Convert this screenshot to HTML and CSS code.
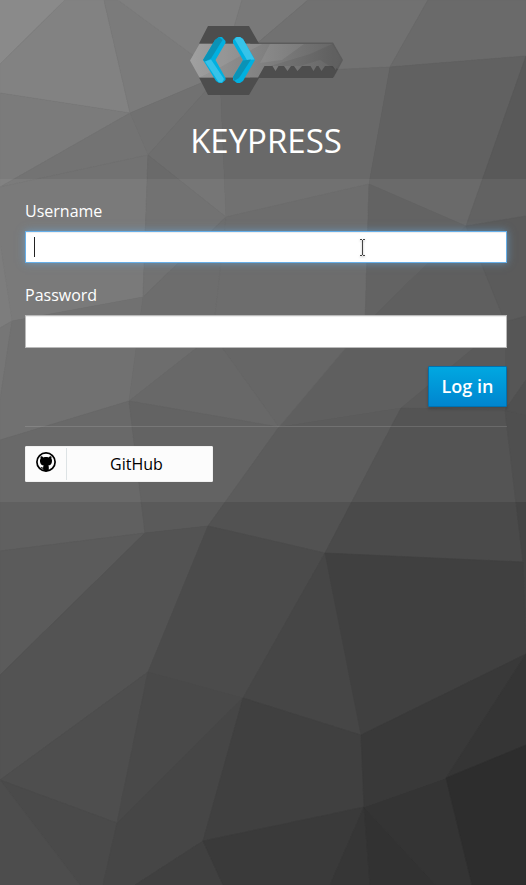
FILE: index.html
```html
<!DOCTYPE html>
<html lang="en">
<head>
<meta charset="utf-8">
<title>KEYPRESS</title>
<link rel="stylesheet" href="styles.css">
</head>
<body>
<svg class="backdrop" viewBox="0 0 526 885" aria-hidden="true">
<g stroke-width=".6">
<path fill="#8a8a8a" stroke="#8a8a8a" d="M0 0H65L0 64z"/>
<path fill="#828282" stroke="#828282" d="M65 0H104L130 113 0 93V64z"/>
<path fill="#7b7b7b" stroke="#7b7b7b" d="M104 0H118L220 75 130 113z"/>
<path fill="#7f7f7f" stroke="#7f7f7f" d="M118 0H242L220 75z"/>
<path fill="#797979" stroke="#797979" d="M242 0H308L220 75z"/>
<path fill="#717171" stroke="#717171" d="M308 0H428L390 67 220 75z"/>
<path fill="#6a6a6a" stroke="#6a6a6a" d="M428 0H526V56L390 67z"/>
<path fill="#7b7b7b" stroke="#7b7b7b" d="M0 93 130 113 0 187z"/>
<path fill="#717171" stroke="#717171" d="M130 113 220 75 148 155z"/>
<path fill="#737373" stroke="#737373" d="M130 113 148 155 0 187z"/>
<path fill="#6e6e6e" stroke="#6e6e6e" d="M220 75 226 217 148 155z"/>
<path fill="#696969" stroke="#696969" d="M220 75 390 67 369 184 226 217z"/>
<path fill="#616161" stroke="#616161" d="M390 67 526 56 466 226 369 184z"/>
<path fill="#595959" stroke="#595959" d="M526 56V216L466 226z"/>
<path fill="#727272" stroke="#727272" d="M0 187 148 155 143 297 12 321 0 243z"/>
<path fill="#6a6a6a" stroke="#6a6a6a" d="M148 155 226 217 143 297z"/>
<path fill="#757575" stroke="#757575" d="M0 243 12 321 0 328z"/>
<path fill="#6e6e6e" stroke="#6e6e6e" d="M12 321 0 328V400z"/>
<path fill="#696969" stroke="#696969" d="M12 321 143 297 129 401 0 440V400z"/>
<path fill="#646464" stroke="#646464" d="M143 297 226 217 213 335 129 401z"/>
<path fill="#646464" stroke="#646464" d="M226 217 369 184 365 325 213 335z"/>
<path fill="#5a5a5a" stroke="#5a5a5a" d="M369 184 466 226 365 325z"/>
<path fill="#565656" stroke="#565656" d="M466 226 505 322 401 408 279 427 365 325z"/>
<path fill="#515151" stroke="#515151" d="M466 226 526 216V316L505 322z"/>
<path fill="#4c4c4c" stroke="#4c4c4c" d="M526 316V380L505 410V322z"/>
<path fill="#505050" stroke="#505050" d="M401 408 505 322V410z"/>
<path fill="#5d5d5d" stroke="#5d5d5d" d="M213 335 365 325 279 427z"/>
<path fill="#5f5f5f" stroke="#5f5f5f" d="M213 335 279 427 129 401z"/>
<path fill="#606060" stroke="#606060" d="M129 401 0 440V551L145 533z"/>
<path fill="#5a5a5a" stroke="#5a5a5a" d="M129 401 279 427 208 526 145 533z"/>
<path fill="#525252" stroke="#525252" d="M279 427 401 408 325 553 208 526z"/>
<path fill="#4a4a4a" stroke="#4a4a4a" d="M401 408 505 410 523 562 325 553z"/>
<path fill="#444" stroke="#444" d="M505 410 526 415V654L523 562z"/>
<path fill="#464646" stroke="#464646" d="M505 410 526 380V415z"/>
<path fill="#5b5b5b" stroke="#5b5b5b" d="M145 533 0 551V675z"/>
<path fill="#535353" stroke="#535353" d="M145 533 208 526 148 672 0 780V675z"/>
<path fill="#4b4b4b" stroke="#4b4b4b" d="M208 526 325 553 243 698 148 672z"/>
<path fill="#464646" stroke="#464646" d="M325 553 361 735 243 698z"/>
<path fill="#404040" stroke="#404040" d="M325 553 523 562 526 654 361 735z"/>
<path fill="#4e4e4e" stroke="#4e4e4e" d="M148 672 117 823 0 780z"/>
<path fill="#494949" stroke="#494949" d="M148 672 243 698 117 823z"/>
<path fill="#4a4a4a" stroke="#4a4a4a" d="M0 780 117 823 103 885H80z"/>
<path fill="#4d4d4d" stroke="#4d4d4d" d="M0 780 80 885H0z"/>
<path fill="#464646" stroke="#464646" d="M117 823 243 698 203 841 135 885H103z"/>
<path fill="#404040" stroke="#404040" d="M203 841 223 885H135z"/>
<path fill="#404040" stroke="#404040" d="M243 698 361 735 364 807 203 841z"/>
<path fill="#3a3a3a" stroke="#3a3a3a" d="M203 841 364 807 330 885H223z"/>
<path fill="#363636" stroke="#363636" d="M364 807 370 885H330z"/>
<path fill="#323232" stroke="#323232" d="M364 807 436 885H370z"/>
<path fill="#343434" stroke="#343434" d="M364 807 446 778 472 885H436z"/>
<path fill="#393939" stroke="#393939" d="M361 735 526 654 446 778 364 807z"/>
<path fill="#353535" stroke="#353535" d="M526 654V745L446 778z"/>
<path fill="#2d2d2d" stroke="#2d2d2d" d="M446 778 526 745V885H472z"/>
</g>
</svg>
<div class="page">
<header class="header">
<svg class="logo" viewBox="190 26 154 70" width="154" height="70" aria-hidden="true">
<defs>
<linearGradient id="metal" x1="0" x2="1"><stop offset="0" stop-color="#999"/><stop offset=".4" stop-color="#858585"/><stop offset="1" stop-color="#646464"/></linearGradient>
</defs>
<path fill="#5c5c5c" d="M250 42.500H333L343 60 334 77H258z"/>
<path fill="#4d4d4d" d="M208 26H249L259 43.500H199zM199 77.500 208 95H249L259 78H333L338 69 325 62H266L250 66V77.500z"/>
<path fill="url(#metal)" d="M199.500 44H332L341.500 60 335.500 70 333 66H325L321.500 71 318.500 66H316.500L313.500 71 310.500 66H302L297.500 71 294 66H291L287.500 71 284 66H278.500L275.500 71 272.500 66H264.500L258 77.500H199.500L190 60.500z"/>
<path fill="#fff" fill-opacity=".07" d="M199.500 44H262L219 68 199.500 77.500 190 60.500zM270 44H304L282 60 260 63z"/>
<path fill="#000" fill-opacity=".06" d="M310 54 332 44 341.500 60 335.500 70 320 60 300 66H270z"/>
<path fill="#00b0e0" d="M219 37H222L225.500 41V43L215.500 60 225.500 78V80L222 83H219L216 81 203 60 215 40z"/>
<path fill="#0b92b6" d="M215 40 219 37 222.500 40 211 58.500 205 61.500 203 60z"/>
<path fill="#36c3ea" d="M205 61.500 211 59.500 224 79 222 82.500 218.500 82z"/>
<path fill="#00b0e0" d="M236 37H240L243 39 255 60 243 81 240 83H237L233 80V77L243 60 233 43V40z"/>
<path fill="#36c3ea" d="M234.500 39 237 37H240L243 39 254.500 59.500 247 60z"/>
<path fill="#0b92b6" d="M243 60.500 251 59.500 239 78 234 81 233 77z"/>
</svg>
<h1 class="title">KEYPRESS</h1>
</header>
<main class="card">
<form class="form">
<div class="field">
<label class="label" for="username">Username</label>
<div class="input input-focused" id="username"><span class="caret"></span>
<svg class="pointer" viewBox="0 0 7 17" width="7" height="17" aria-hidden="true"><path fill="none" stroke="#444" d="M1 .5H3M4 .5H6M3.500 1V16M1 16.500H3M4 16.500H6"/></svg>
</div>
</div>
<div class="field">
<label class="label" for="password">Password</label>
<div class="input" id="password"></div>
</div>
<div class="actions"><button class="login" type="button">Log in</button></div>
</form>
<div class="social">
<button class="provider" type="button">
<span class="provider-icon"><svg viewBox="0 0 20 20" width="20" height="20" aria-hidden="true"><circle cx="10" cy="10" r="9.100" fill="none" stroke="#000" stroke-width="1.700"/><path d="M4.700 4.300C5.900 4.300 6.800 4.900 7.500 5.400 9 5 11 5 12.500 5.400 13.200 4.900 14.100 4.300 15.300 4.300 15.600 5.200 15.600 6 15.400 6.700 16.200 7.800 16.100 9 15.800 10.400 15.400 12.500 14 13.300 12.300 13.600 12.700 14.200 12.800 14.700 12.800 15.400V18.800C11 19.400 9 19.400 7.200 18.800V16.700C5.500 17 5 15.800 4.400 15 5.500 15 6 15.800 7.200 15.500 7.200 14.600 7.300 14.200 7.700 13.600 6 13.300 4.600 12.500 4.200 10.400 3.900 9 3.800 7.800 4.600 6.700 4.400 6 4.400 5.200 4.700 4.300z"/></svg></span>
<span class="provider-name">GitHub</span>
</button>
</div>
</main>
</div>
</body>
</html>
```
FILE: styles.css
```css
* {
  box-sizing: border-box;
}

body {
  margin: 0;
  display: grid;
  width: 526px;
  height: 885px;
  overflow: hidden;
  background: #4a4a4a;
  color: #fff;
  font-family: "Open Sans", "Noto Sans", sans-serif;
  font-size: 16px;
}

.backdrop,
.page {
  grid-area: 1 / 1;
}

.backdrop {
  width: 526px;
  height: 885px;
}

.page {
  z-index: 1;
}

.header {
  display: flex;
  flex-direction: column;
  align-items: center;
  height: 179px;
  padding: 26px 0 0 7px;
}

.title {
  margin: 22px 0 0;
  padding-right: 1px;
  font-size: 33px;
  font-weight: 400;
  line-height: 46px;
}

.card {
  height: 323px;
  padding: 20px 19px 0 25px;
  background: rgba(255, 255, 255, .06);
}

.field {
  height: 84px;
}

.label {
  display: block;
  height: 32px;
  line-height: 24px;
}

.input {
  display: flex;
  align-items: center;
  position: relative;
  height: 33px;
  padding: 0 9px;
  background: #fff;
  border: 1px solid #bababa;
  box-shadow: inset 0 1px 1px rgba(3, 3, 3, .075);
}

.input-focused {
  height: 32px;
  border-color: #66afe9;
  box-shadow: inset 0 1px 1px rgba(0, 0, 0, .075), 0 0 8px rgba(102, 175, 233, .6);
}

.caret {
  width: 1px;
  height: 20px;
  margin-left: -1px;
  background: #222;
}

.pointer {
  position: absolute;
  left: 333px;
  top: 7px;
  filter: drop-shadow(0 1px 1px rgba(0, 0, 0, .3));
}

.actions {
  display: flex;
  justify-content: flex-end;
  height: 60px;
  margin-top: -1px;
}

.login {
  width: 79px;
  height: 41px;
  padding: 0 0 1px;
  border: 1px solid #0071b0;
  border-radius: 1px;
  background: linear-gradient(#00a8e1, #0085cf);
  box-shadow: 0 2px 3px rgba(3, 3, 3, .2);
  color: #fff;
  font: 600 18px/24px "Open Sans", sans-serif;
}

.social {
  padding-top: 19px;
  border-top: 1px solid rgba(255, 255, 255, .13);
}

.provider {
  display: flex;
  align-items: center;
  width: 188px;
  height: 36px;
  padding: 0;
  border: 1px solid #f1f1f1;
  border-radius: 1px;
  background: #fcfcfc;
  color: #000;
  font: 16px/24px "Open Sans", sans-serif;
}

.provider-icon {
  display: flex;
  justify-content: center;
  width: 41px;
  height: 32px;
  padding-top: 4px;
  border-right: 1px solid #dde3e5;
}

.provider-name {
  flex: 1;
  padding-right: 6px;
  text-align: center;
}
```
